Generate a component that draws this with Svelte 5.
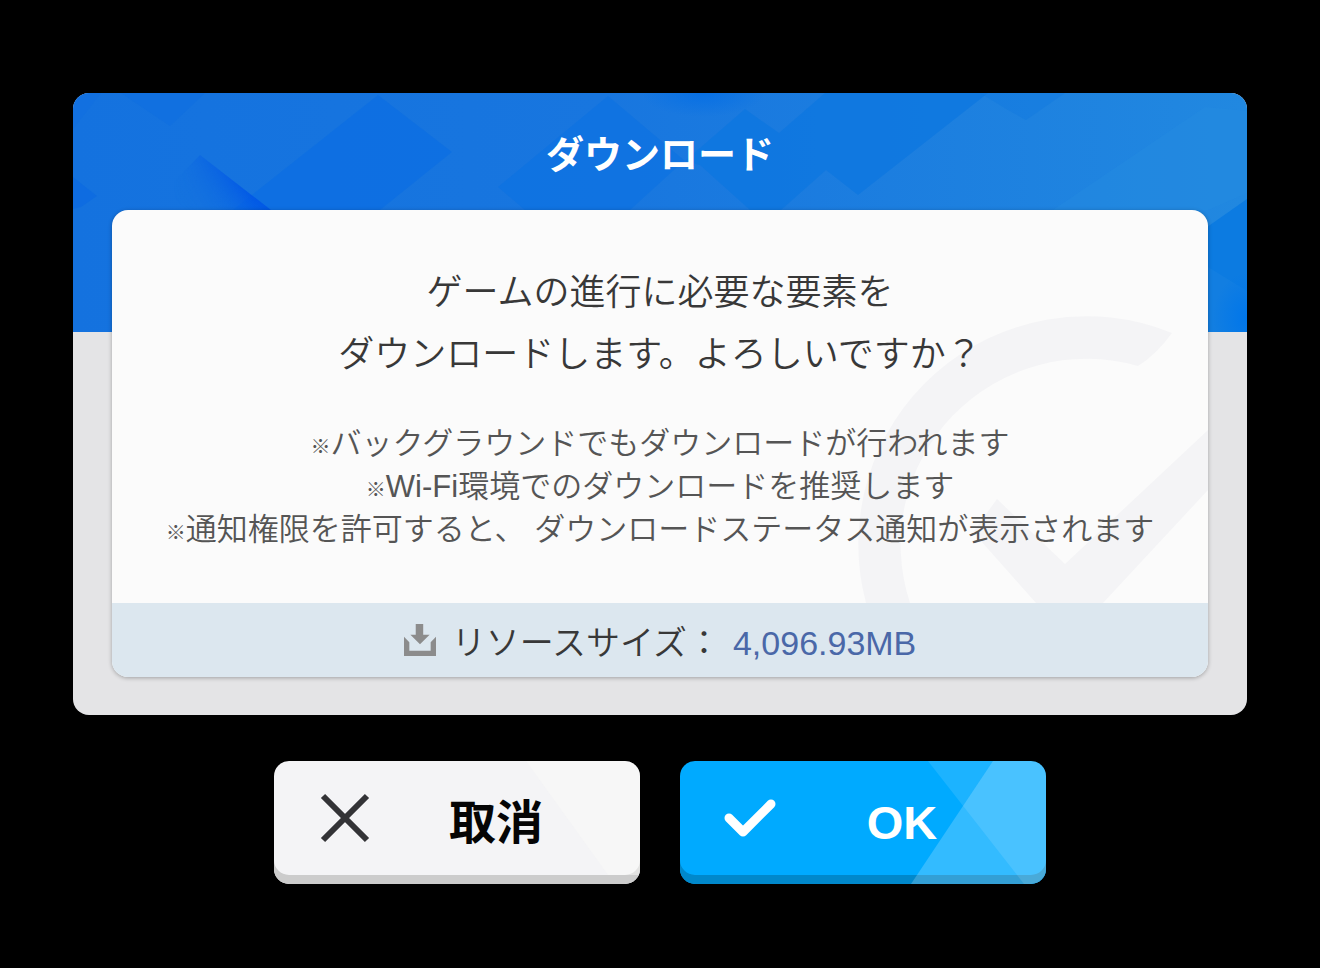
<script lang="ts">
	const lines = ['ゲームの進行に必要な要素を', 'ダウンロードします。よろしいですか？'];
	const notes = [
		'バックグラウンドでもダウンロードが行われます',
		'Wi-Fi環境でのダウンロードを推奨します',
		'通知権限を許可すると、 ダウンロードステータス通知が表示されます'
	];
	const size = '4,096.93MB';
</script>

<main class="screen">
	<section class="dialog" aria-labelledby="dialog-title">
		<svg class="pattern" viewBox="0 0 1174 239" preserveAspectRatio="none" aria-hidden="true">
			<defs>
				<linearGradient id="base" x1="0" x2="1" y1="0" y2="0">
					<stop offset="0" stop-color="#1472df" />
					<stop offset="0.45" stop-color="#1876df" />
					<stop offset="1" stop-color="#2188e0" />
				</linearGradient>
				<linearGradient id="fold" gradientUnits="userSpaceOnUse" x1="166" y1="88" x2="132" y2="132">
					<stop offset="0" stop-color="#0056e6" />
					<stop offset="1" stop-color="#0b6be4" stop-opacity="0" />
				</linearGradient>
				<linearGradient id="foldFade" gradientUnits="userSpaceOnUse" x1="100" y1="0" x2="180" y2="0">
					<stop offset="0" stop-color="#000" />
					<stop offset="1" stop-color="#fff" />
				</linearGradient>
				<mask id="foldMask"><rect width="1174" height="239" fill="url(#foldFade)" /></mask>
				<radialGradient id="glow">
					<stop offset="0" stop-color="#006ce6" />
					<stop offset="1" stop-color="#006ce6" stop-opacity="0" />
				</radialGradient>
				<radialGradient id="corner">
					<stop offset="0" stop-color="#0076ea" />
					<stop offset="1" stop-color="#0076ea" stop-opacity="0" />
				</radialGradient>
			</defs>
			<rect width="1174" height="239" fill="url(#base)" />
			<path d="M48 0H132L97 33Z" fill="#0e6ee2" opacity="0.5" />
			<path d="M0 0H28L0 36Z" fill="#0e6ee2" opacity="0.4" />
			<path d="M0 84L24 103L8 114L0 116Z" fill="#0565e3" opacity="0.4" />
			<path d="M305 2L379 59L307 117H160Z" fill="#0b6ee2" opacity="0.7" />
			<g mask="url(#foldMask)">
				<path d="M127 62L198 117L218 239H90V100Z" fill="url(#fold)" />
			</g>
			<path d="M535 3L425 94L452 117H557L602 76L612 68Z" fill="#0d72e1" opacity="0.7" />
			<ellipse cx="630" cy="0" rx="62" ry="24" fill="url(#glow)" opacity="0.7" />
			<path d="M672 16L706 40L752 0H915L785 102L753 77L708 117H677L627 72L612 68Z" fill="#0c76e0" opacity="0.7" />
			<path d="M907 0H992L953 27L935 17Z" fill="#1279e0" opacity="0.5" />
			<path d="M1174 18L1132 14L980 117H1135L1174 100Z" fill="#258be0" opacity="0.4" />
			<path d="M1174 106L1100 158V239H1174Z" fill="#0c7be1" />
			<path d="M1135 174L1174 198V239H1135Z" fill="#1b84e0" opacity="0.4" />
			<ellipse cx="1174" cy="225" rx="34" ry="46" fill="url(#corner)" />
		</svg>

		<h1 class="title" id="dialog-title">ダウンロード</h1>

		<div class="panel">
			<div class="content">
				<svg class="watermark" viewBox="0 0 350 288" aria-hidden="true">
					<path
						d="M314 18A228 228 0 0 0 8 288H52A186 186 0 0 1 280 51Q298 40 314 18Z"
					/>
					<path d="M139 184L207 249L350 115V175L245 288H178L115 217Z" />
				</svg>
				<p class="message">
					{#each lines as line}
						<span>{line}</span>
					{/each}
				</p>
				<ul class="notes">
					{#each notes as note}
						<li><span class="mark">※</span>{note}</li>
					{/each}
				</ul>
			</div>
			<div class="resource">
				<svg class="download" viewBox="0 0 30 30" width="32" height="32" aria-hidden="true">
					<path d="M11 0H18V10H24L15 19L6 10H11ZM0 12L5 17V25H25V17L30 12V30H0Z" />
				</svg>
				<p class="amount">リソースサイズ：<strong class="size">{size}</strong></p>
			</div>
		</div>
	</section>

	<div class="actions">
		<button class="action cancel" type="button">
			<svg class="facets" viewBox="0 0 366 123" preserveAspectRatio="none" aria-hidden="true">
				<path d="M252 0H366V114H334Z" fill="#f9f9f8" opacity="0.5" />
			</svg>
			<svg class="icon" viewBox="0 0 54 54" aria-hidden="true">
				<path d="M5 5L49 49M49 5L5 49" />
			</svg>
			<span class="label">取消</span>
		</button>
		<button class="action ok" type="button">
			<svg class="facets" viewBox="0 0 366 123" preserveAspectRatio="none" aria-hidden="true">
				<path d="M248 0H366V123H344Z" fill="#fff" opacity="0.11" />
				<path d="M313 0H366V123H231Z" fill="#fff" opacity="0.2" />
			</svg>
			<svg class="icon" viewBox="0 0 54 54" aria-hidden="true">
				<path d="M5 27L19 41L47 13" />
			</svg>
			<span class="label">OK</span>
		</button>
	</div>
</main>

<style>
	:global(body) {
		background: #000;
	}

	.screen {
		box-sizing: border-box;
		min-height: 100vh;
		padding: 93px 73px 84px;
		font-family: 'Liberation Sans', 'Noto Sans CJK JP', sans-serif;
		color: #383838;
	}

	.dialog {
		position: relative;
		overflow: hidden;
		padding: 0 39px 38px;
		border-radius: 16px;
		background: #e4e4e6;
	}

	.pattern {
		position: absolute;
		top: 0;
		left: 0;
		width: 100%;
		height: 239px;
	}

	.title {
		position: relative;
		margin: 0;
		padding: 8px 0 0;
		font-size: 38px;
		line-height: 109px;
		font-weight: 700;
		text-align: center;
		color: #fff;
	}

	.panel {
		position: relative;
		overflow: hidden;
		border-radius: 16px;
		background: #fbfbfb;
		box-shadow: 0 1px 4px rgba(0, 0, 0, 0.3);
	}

	.content {
		position: relative;
		padding: 52px 24px 52px;
		text-align: center;
	}

	.watermark {
		position: absolute;
		right: 0;
		bottom: 0;
		width: 350px;
		height: 288px;
		fill: #f4f4f6;
	}

	.message {
		position: relative;
		display: flex;
		flex-direction: column;
		margin: 0;
		font-size: 36px;
		line-height: 62px;
		font-weight: 350;
	}

	.notes {
		position: relative;
		margin: 36px 0 0;
		padding: 0;
		list-style: none;
		font-size: 31px;
		line-height: 43px;
		font-weight: 350;
		color: #555;
	}

	.mark {
		font-family: 'Noto Sans CJK JP', sans-serif;
		font-size: 20px;
		line-height: 20px;
		font-weight: 900;
	}

	.resource {
		position: relative;
		display: flex;
		align-items: center;
		justify-content: center;
		height: 74px;
		background: #dce7ef;
	}

	.download {
		margin-right: 16px;
		fill: #8c8c8c;
	}

	.amount {
		margin: 0;
		font-size: 34px;
		font-weight: 350;
	}

	.size {
		margin-left: 12px;
		font-weight: 400;
		color: #4a68a8;
	}

	.actions {
		display: flex;
		flex-wrap: wrap;
		justify-content: center;
		gap: 40px;
		margin-top: 46px;
	}

	.action {
		position: relative;
		display: flex;
		align-items: center;
		overflow: hidden;
		width: 366px;
		height: 123px;
		padding: 0 44px 9px;
		border: none;
		border-radius: 15px;
		font-family: inherit;
		font-size: 47px;
		font-weight: 700;
		cursor: pointer;
	}

	.cancel {
		background: #f4f4f6;
		box-shadow: inset 0 -9px #ccc;
		color: #050505;
	}

	.ok {
		background: #00aaff;
		box-shadow: inset 0 -9px #0088cb;
		color: #fff;
	}

	.facets {
		position: absolute;
		inset: 0;
		width: 100%;
		height: 100%;
	}

	.icon {
		position: relative;
		width: 54px;
		height: 54px;
		fill: none;
		stroke-width: 6;
		stroke: #333336;
	}

	.ok .icon {
		stroke: #fff;
		stroke-width: 9;
		stroke-linecap: round;
		stroke-linejoin: round;
	}

	.label {
		position: relative;
		flex: 1;
		padding-left: 24px;
	}

	.ok .label {
		padding-top: 8px;
	}
</style>
